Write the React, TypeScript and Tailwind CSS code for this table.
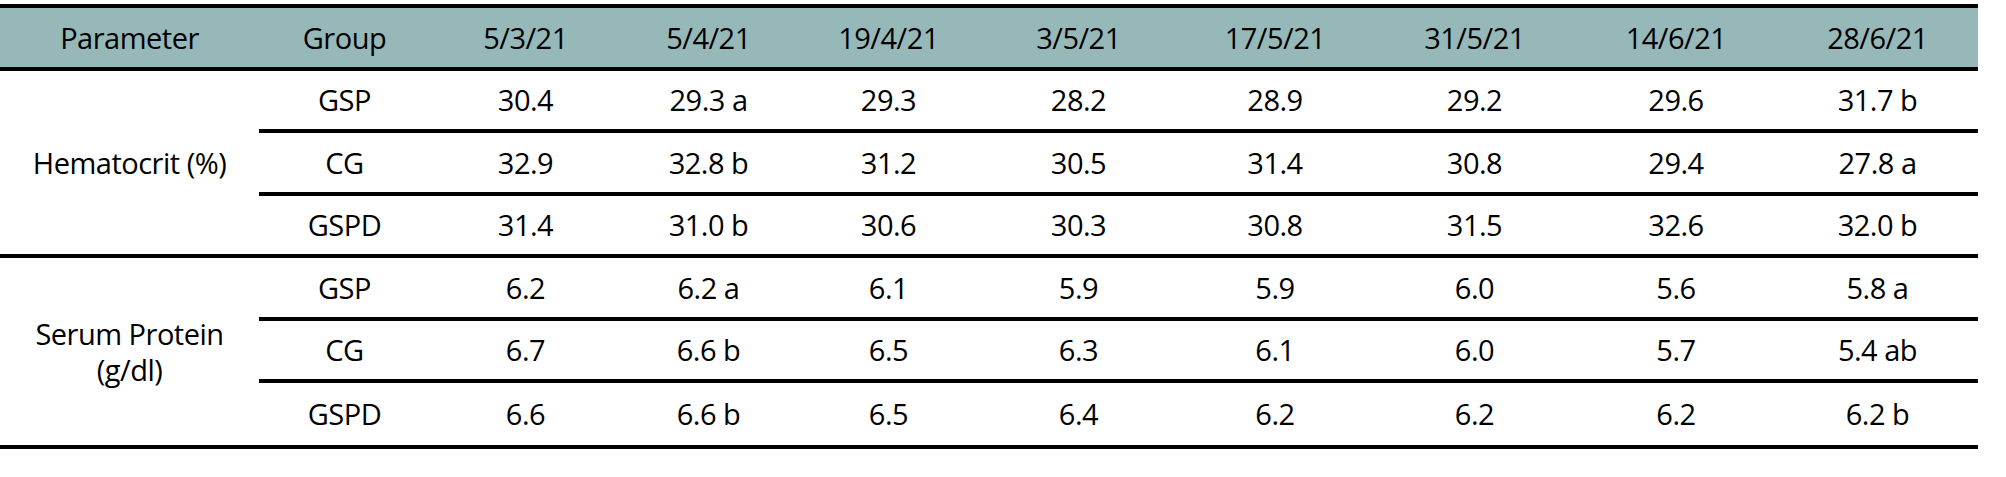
import React from "react";

const cols = "grid-cols-[171px_191px_175px_185px_195px_198px_201px_202px_201px]";

const dates = ["5/3/21", "5/4/21", "19/4/21", "3/5/21", "17/5/21", "31/5/21", "14/6/21", "28/6/21"];

type Row = { g: string; v: string[]; h: string };

const hema: Row[] = [
  { g: "GSP", v: ["30.4", "29.3 a", "29.3", "28.2", "28.9", "29.2", "29.6", "31.7 b"], h: "h-[58px]" },
  { g: "CG", v: ["32.9", "32.8 b", "31.2", "30.5", "31.4", "30.8", "29.4", "27.8 a"], h: "h-[59px]" },
  { g: "GSPD", v: ["31.4", "31.0 b", "30.6", "30.3", "30.8", "31.5", "32.6", "32.0 b"], h: "h-[58px]" },
];

const serum: Row[] = [
  { g: "GSP", v: ["6.2", "6.2 a", "6.1", "5.9", "5.9", "6.0", "5.6", "5.8 a"], h: "h-[59px]" },
  { g: "CG", v: ["6.7", "6.6 b", "6.5", "6.3", "6.1", "6.0", "5.7", "5.4 ab"], h: "h-[58px]" },
  { g: "GSPD", v: ["6.6", "6.6 b", "6.5", "6.4", "6.2", "6.2", "6.2", "6.2 b"], h: "h-[62px]" },
];

function DataRow({ r }: { r: Row }) {
  return (
    <div className={`grid ${cols} ${r.h} items-center text-center`}>
      <div>{r.g}</div>
      {r.v.map((x, i) => (
        <div key={i}>{x}</div>
      ))}
    </div>
  );
}

function Group({ label, rows }: { label: React.ReactNode; rows: Row[] }) {
  return (
    <div className="flex">
      <div className="w-[259px] flex items-center justify-center text-center leading-[36px]">{label}</div>
      <div className="flex flex-col w-[1719px]">
        <DataRow r={rows[0]} />
        <div className="h-[4px] bg-black" />
        <DataRow r={rows[1]} />
        <div className="h-[4px] bg-black" />
        <DataRow r={rows[2]} />
      </div>
    </div>
  );
}

export default function App() {
  return (
    <div className="w-[2006px] h-[477px] bg-white text-black text-[29px] tracking-[-0.5px] font-['Open_Sans',sans-serif]">
      <div className="pt-[4px] w-[1978px]">
        <div className="h-[4px] bg-black" />
        <div className="flex h-[59px] bg-[#97b8b8] items-center text-center">
          <div className="w-[259px]">Parameter</div>
          <div className={`grid ${cols} w-[1719px]`}>
            <div>Group</div>
            {dates.map((d) => (
              <div key={d}>{d}</div>
            ))}
          </div>
        </div>
        <div className="h-[4px] bg-black" />
        <Group label="Hematocrit (%)" rows={hema} />
        <div className="h-[4px] bg-black" />
        <Group
          label={
            <span>
              Serum Protein
              <br />
              (g/dl)
            </span>
          }
          rows={serum}
        />
        <div className="h-[4px] bg-black" />
      </div>
    </div>
  );
}
